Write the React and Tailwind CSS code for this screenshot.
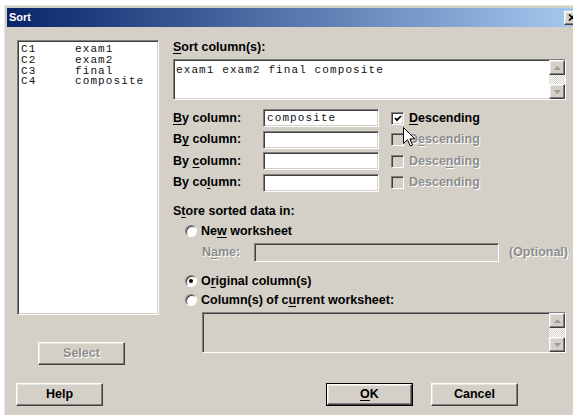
import React from "react";

const SANS = "font-['Liberation_Sans',Arial,sans-serif]";
const MONO = "font-['Liberation_Mono','Courier_New',monospace] text-[11px] tracking-[1.1px] font-normal text-[#111]";

const SUNKEN =
  "border border-t-[#808080] border-l-[#808080] border-b-white border-r-white shadow-[inset_1px_1px_0_#404040,inset_-1px_-1px_0_#d4d0c8]";
const RAISED =
  "bg-[#d4d0c8] border border-t-white border-l-white border-b-[#404040] border-r-[#404040] shadow-[inset_-1px_-1px_0_#808080,inset_1px_1px_0_#e8e6e0]";
const DISABLED = "text-[#8c8c8c] [text-shadow:1px_1px_0_#ffffff]";

function U({ children }) {
  return <span className="underline decoration-1 underline-offset-[2px]">{children}</span>;
}

function Arrow({ down }) {
  return (
    <svg width="7" height="4" viewBox="0 0 7 4">
      <path d={down ? "M0 0 L7 0 L3.5 4 Z" : "M3.5 0 L7 4 L0 4 Z"} fill="#9a9a9a" />
    </svg>
  );
}

function ScrollBar() {
  return (
    <div className="flex w-[16px] flex-col">
      <div className={`${RAISED} flex h-[15px] items-center justify-center`}>
        <Arrow />
      </div>
      <div className="flex-1 bg-[repeating-conic-gradient(#ffffff_0_25%,#d4d0c8_0_50%)] bg-[length:2px_2px]" />
      <div className={`${RAISED} flex h-[15px] items-center justify-center`}>
        <Arrow down />
      </div>
    </div>
  );
}

function Check({ checked, disabled }) {
  return (
    <div
      className={`${SUNKEN} ml-[12px] flex h-[13px] w-[13px] shrink-0 items-center justify-center ${
        disabled ? "bg-[#d4d0c8]" : "bg-white"
      }`}
    >
      {checked && (
        <svg width="8" height="7" viewBox="0 0 8 7">
          <path d="M1 3 L3 5.2 L7 1" fill="none" stroke="#000" strokeWidth="1.8" />
        </svg>
      )}
    </div>
  );
}

function Radio({ on }) {
  return (
    <div className="relative flex h-[12px] w-[12px] shrink-0 items-center justify-center rounded-full border border-t-[#808080] border-l-[#808080] border-b-white border-r-white bg-white shadow-[inset_1px_1px_0_#404040]">
      {on && <div className="h-[4px] w-[4px] rounded-full bg-black" />}
    </div>
  );
}

function Button({ children, disabled, isDefault, className = "" }) {
  const face = (
    <div
      className={`${RAISED} flex h-full w-full items-center justify-center text-[12.5px] font-bold ${
        disabled ? DISABLED : "text-black"
      }`}
    >
      {children}
    </div>
  );
  if (isDefault) {
    return <div className={`h-[23px] w-[87px] border border-black ${className}`}>{face}</div>;
  }
  return <div className={`h-[23px] w-[87px] ${className}`}>{face}</div>;
}

const byRows = [
  { label: [<U key="b">B</U>, "y column:"], value: "composite", checked: true, desc: [<U key="d">D</U>, "escending"] },
  { label: ["B", <U key="y">y</U>, " column:"], value: "", desc: ["D", <U key="e">e</U>, "scending"] },
  { label: ["By ", <U key="c">c</U>, "olumn:"], value: "", desc: ["Desce", <U key="n">n</U>, "ding"] },
  { label: ["By co", <U key="l">l</U>, "umn:"], value: "", desc: ["Descending"] },
];

const columns = [
  ["C1", "exam1"],
  ["C2", "exam2"],
  ["C3", "final"],
  ["C4", "composite"],
];

export default function App() {
  return (
    <div className={`relative h-[415px] w-[573px] overflow-hidden bg-white pl-[4px] pt-[5px] ${SANS}`}>
      <div className="h-[420px] w-[580px] border-l border-t border-l-[#e8e6e0] border-t-[#e8e6e0] bg-[#d4d0c8] p-[2px]">
        {/* title bar */}
        <div className="flex h-[19px] items-center justify-between bg-[linear-gradient(to_right,#0a246a,#a6caf0)] pl-[2px] pr-[2px]">
          <span className="text-[11px] font-bold text-white">Sort</span>
          <div className={`${RAISED} flex h-[14px] w-[16px] items-center justify-center`}>
            <svg width="8" height="7" viewBox="0 0 8 7">
              <path d="M1 0.5 L7 6.5 M7 0.5 L1 6.5" stroke="#000" strokeWidth="1.7" />
            </svg>
          </div>
        </div>

        {/* dialog body */}
        <div className="flex pl-[10px] pt-[13px]">
          {/* column list */}
          <div className="flex w-[142px] flex-col">
            <div className={`${SUNKEN} h-[275px] bg-white pl-[3px] pt-[3px] ${MONO} leading-[10.8px]`}>
              {columns.map(([c, n]) => (
                <div key={c} className="flex h-[10.8px]">
                  <span className="w-[54px]">{c}</span>
                  <span>{n}</span>
                </div>
              ))}
            </div>
            <Button disabled className="ml-[21px] mt-[27px]">
              Select
            </Button>
          </div>

          {/* options */}
          <div className="ml-[14px] flex w-[395px] flex-col text-[12.5px] font-bold text-black">
            <div className="h-[14px] leading-[14px]">
              <U>S</U>ort column(s):
            </div>
            <div className={`${SUNKEN} mt-[5px] flex h-[41px] w-[393px] bg-white`}>
              <div className={`flex-1 pl-[2px] pt-[3px] ${MONO} leading-[14px]`}>exam1 exam2 final composite</div>
              <ScrollBar />
            </div>

            <div className="mt-[9px] flex flex-col gap-[3.5px]">
              {byRows.map((r, i) => (
                <div key={i} className="flex h-[18px] items-center">
                  <div className="w-[90px]">{r.label}</div>
                  <div className={`${SUNKEN} flex h-[18px] w-[116px] items-center bg-white pl-[3px] ${MONO}`}>
                    {r.value}
                  </div>
                  <Check checked={r.checked} disabled={i > 0} />
                  <div className={`ml-[5px] ${i > 0 ? DISABLED : ""}`}>{r.desc}</div>
                </div>
              ))}
            </div>

            <div className="mt-[12.5px] h-[14px] leading-[14px]">
              S<U>t</U>ore sorted data in:
            </div>
            <div className="ml-[12px] mt-[5px] flex h-[16px] items-center">
              <Radio />
              <span className="ml-[4px]">
                Ne<U>w</U> worksheet
              </span>
            </div>
            <div className="mt-[4px] flex h-[19px] items-center pl-[29px]">
              <div className={`w-[52px] ${DISABLED}`}>
                N<U>a</U>me:
              </div>
              <div className={`${SUNKEN} h-[19px] w-[245px] bg-[#d4d0c8]`} />
              <div className={`ml-[10px] ${DISABLED}`}>(Optional)</div>
            </div>
            <div className="ml-[12px] mt-[11px] flex h-[16px] items-center">
              <Radio on />
              <span className="ml-[4px]">
                O<U>r</U>iginal column(s)
              </span>
            </div>
            <div className="ml-[12px] mt-[3px] flex h-[16px] items-center">
              <Radio />
              <span className="ml-[4px]">
                Column(s) of c<U>u</U>rrent worksheet:
              </span>
            </div>
            <div className={`${SUNKEN} ml-[29px] mt-[4px] flex h-[41px] w-[364px] bg-[#d4d0c8]`}>
              <div className="flex-1" />
              <ScrollBar />
            </div>
          </div>
        </div>

        {/* action buttons */}
        <div className="mt-[18px] flex pl-[9px]">
          <Button>Help</Button>
          <Button isDefault className="ml-[223px]">
            <U>O</U>K
          </Button>
          <Button className="ml-[18px]">Cancel</Button>
        </div>
      </div>

      {/* mouse pointer */}
      <svg className="absolute left-[403px] top-[127px]" width="13" height="20" viewBox="0 0 13 20">
        <path
          d="M0.5 0.5 L0.5 16.5 L4.5 12.8 L7.3 19 L9.6 18 L6.9 11.9 L11.8 11.9 Z"
          fill="#ffffff"
          stroke="#000000"
          strokeWidth="1"
        />
      </svg>
    </div>
  );
}
